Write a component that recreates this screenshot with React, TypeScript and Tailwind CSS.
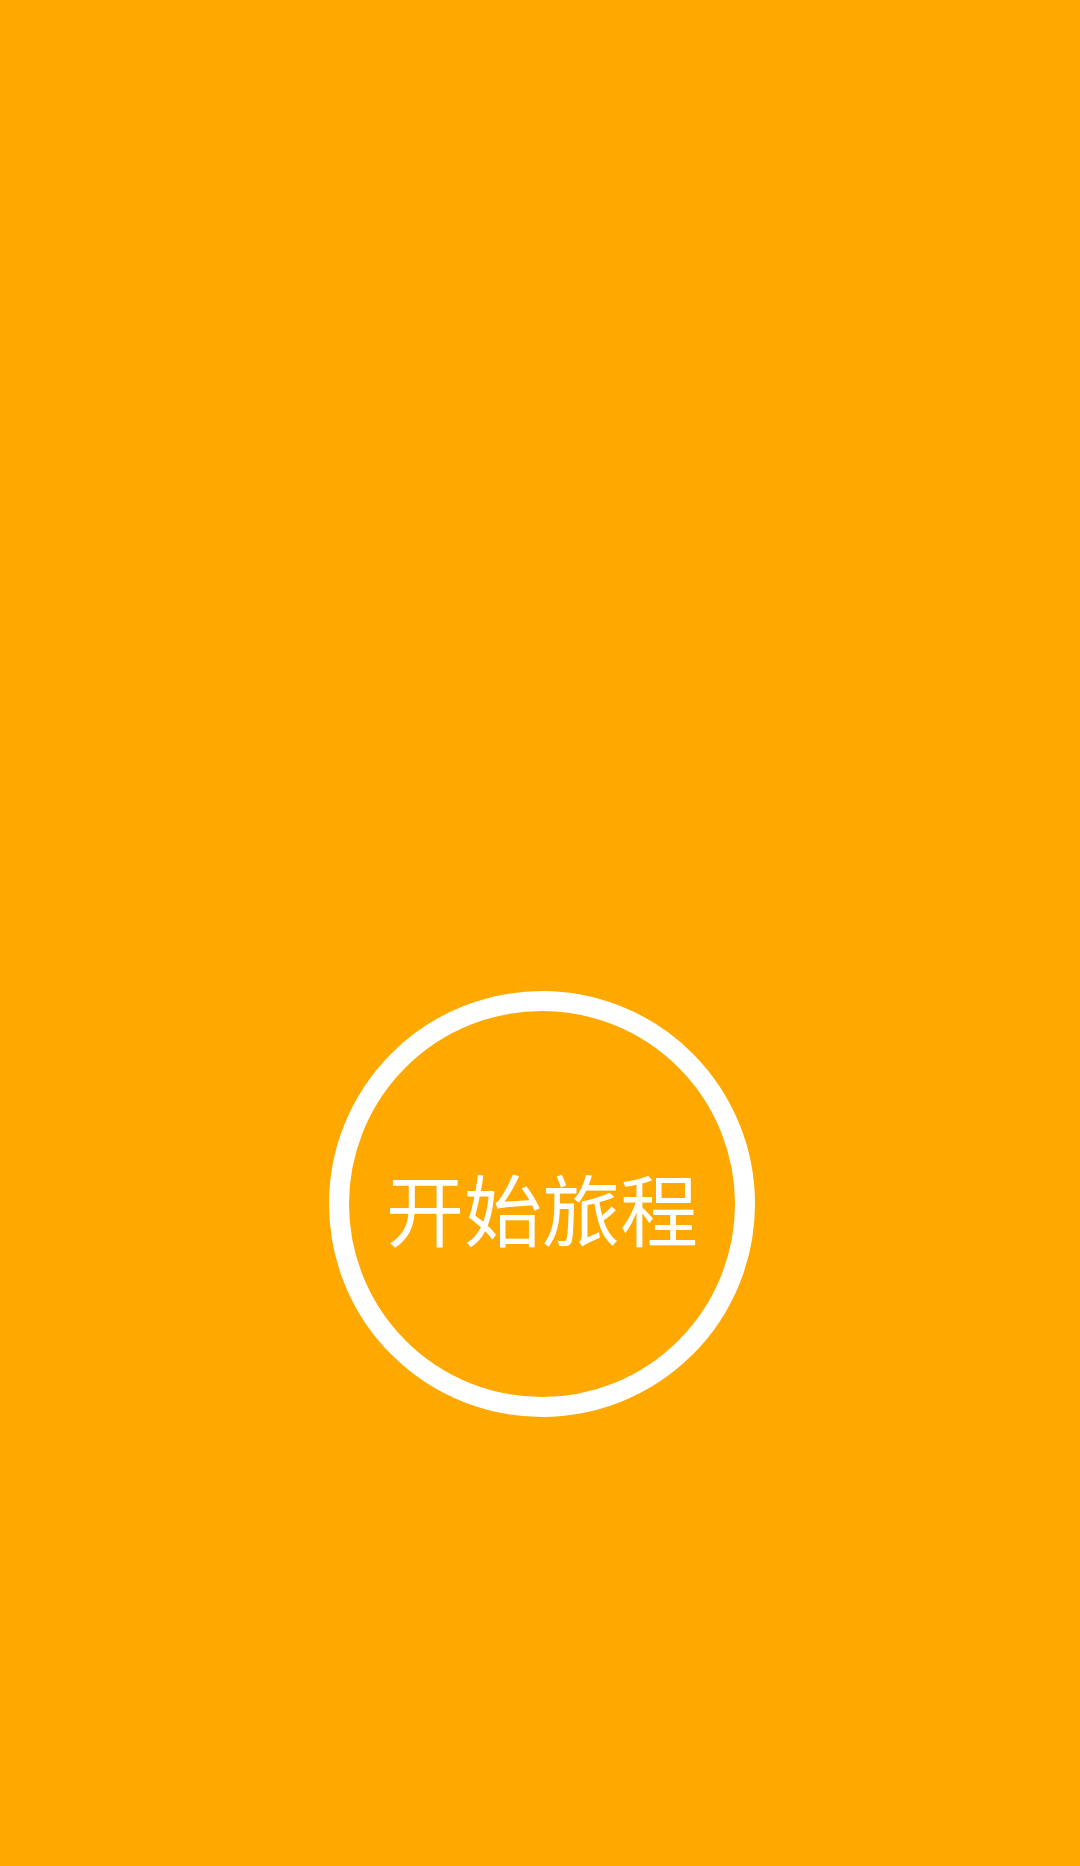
export default function App() {
  return (
    <div className="w-[1080px] h-[1866px] bg-[#ffa800] flex flex-col items-center pt-[991px] pl-[4px]">
      <div className="w-[426px] h-[426px] rounded-full border-[20px] border-white flex items-center justify-center">
        <span
          className="text-white text-[78px] leading-none font-normal pt-[6px]"
          style={{ fontFamily: '"Noto Sans CJK SC", "Noto Sans", sans-serif' }}
        >
          开始旅程
        </span>
      </div>
    </div>
  );
}
